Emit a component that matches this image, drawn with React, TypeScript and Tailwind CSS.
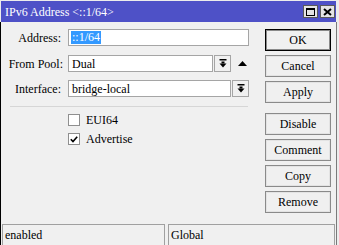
import React from 'react';

function DropIcon() {
  return (
    <svg width="8" height="9" viewBox="0 0 8 9">
      <rect x="0.5" y="0" width="7" height="1.5" fill="#000" />
      <rect x="2.5" y="2.5" width="3" height="2" fill="#000" />
      <polygon points="0.5,4.5 7.5,4.5 4,8.5" fill="#000" />
    </svg>
  );
}

function Btn({ label, primary, className = '' }: { label: string; primary?: boolean; className?: string }) {
  return (
    <button
      className={`h-[22px] w-full bg-[#f0f0f0] text-[12px] text-black leading-none [font-family:Liberation_Serif,serif] ${
        primary ? 'border border-black shadow-[inset_0_0_0_1px_#8a8a8a]' : 'border border-[#8a8a8a] shadow-[inset_0_0_0_1px_#e3e3e3]'
      } ${className}`}
    >
      {label}
    </button>
  );
}

function Check({ checked, label, className = '' }: { checked?: boolean; label: string; className?: string }) {
  return (
    <div className={`flex items-center h-[12px] ${className}`}>
      <div className="w-[12px] h-[12px] border border-[#8f8f8f] bg-white flex items-center justify-center">
        {checked && (
          <svg width="8" height="7" viewBox="0 0 8 7">
            <polyline points="0.8,3.2 3,5.6 7.2,0.8" fill="none" stroke="#000" strokeWidth="1.6" />
          </svg>
        )}
      </div>
      <span className="ml-[6px] text-[12px] leading-none">{label}</span>
    </div>
  );
}

export default function App() {
  return (
    <div className="w-[339px] h-[245px] bg-[#ececec] flex flex-col [font-family:Liberation_Serif,serif] text-black overflow-hidden">
      {/* title bar */}
      <div className="mt-[1px] ml-[1px] mr-[3px] h-[21px] bg-[#4e51c7] flex items-center justify-between pl-[4px] pr-[1px]">
        <span className="text-white text-[12px] leading-none whitespace-nowrap">IPv6 Address &lt;::1/64&gt;</span>
        <div className="flex gap-[2px] items-center">
          <div className="w-[15px] h-[13px] bg-[#e4e4e4] border border-[#5a5a5a] flex items-center justify-center">
            <div className="w-[9px] h-[8px] border border-black border-t-2" />
          </div>
          <div className="w-[15px] h-[13px] bg-[#e4e4e4] border border-[#5a5a5a] flex items-center justify-center">
            <svg width="9" height="8" viewBox="0 0 9 8">
              <path d="M1 1 L8 7 M8 1 L1 7" stroke="#000" strokeWidth="2" />
            </svg>
          </div>
        </div>
      </div>

      {/* body */}
      <div className="flex-1 flex flex-col bg-[#f0f0f0] border-l border-black border-r border-r-[#7a7a7a] mr-[2px]">
        <div className="flex flex-1">
          {/* form */}
          <div className="w-[248px] pt-[7px] text-[12px]">
            <div className="flex items-center h-[17px]">
              <span className="w-[60px] text-right">Address:</span>
              <div className="ml-[7px] w-[181px] h-[17px] border border-[#a5a5a5] bg-white flex items-center pl-[2px]">
                <span className="bg-[#3399ff] text-white leading-[13px] px-[1px]">::1/64</span>
              </div>
            </div>
            <div className="flex items-center h-[17px] mt-[9px]">
              <span className="w-[62px] text-right">From Pool:</span>
              <div className="ml-[5px] w-[145px] h-[17px] border border-[#a5a5a5] bg-white flex items-center pl-[3px]">
                Dual
              </div>
              <div className="ml-[1px] w-[17px] h-[17px] border border-[#a5a5a5] bg-[#f0f0f0] flex items-center justify-center">
                <DropIcon />
              </div>
              <svg className="ml-[7px]" width="9" height="5" viewBox="0 0 9 5">
                <polygon points="0,5 9,5 4.5,0" fill="#000" />
              </svg>
            </div>
            <div className="flex items-center h-[17px] mt-[8px]">
              <span className="w-[60px] text-right">Interface:</span>
              <div className="ml-[7px] w-[163px] h-[17px] border border-[#a5a5a5] bg-white flex items-center pl-[3px]">
                bridge-local
              </div>
              <div className="ml-[1px] w-[17px] h-[17px] border border-[#a5a5a5] bg-[#f0f0f0] flex items-center justify-center">
                <DropIcon />
              </div>
            </div>
            <div className="ml-[9px] mt-[9px] h-px w-[238px] bg-[#d6d6d6]" />
            <div className="pl-[67px]">
              <Check label="EUI64" className="mt-[7px]" />
              <Check label="Advertise" checked className="mt-[7px]" />
            </div>
          </div>

          {/* buttons */}
          <div className="ml-[16px] w-[66px] pt-[7px] flex flex-col">
            <Btn label="OK" primary />
            <Btn label="Cancel" className="mt-[4px]" />
            <Btn label="Apply" className="mt-[4px]" />
            <Btn label="Disable" className="mt-[10px]" />
            <Btn label="Comment" className="mt-[4px]" />
            <Btn label="Copy" className="mt-[4px]" />
            <Btn label="Remove" className="mt-[4px]" />
          </div>
        </div>

        {/* status bar */}
        <div className="flex gap-[3px] pl-[1px] pr-[1px] h-[21px] text-[12px]">
          <div className="w-[163px] border border-[#a0a0a0] border-b-0 flex items-center pl-[2px]">enabled</div>
          <div className="flex-1 border border-[#a0a0a0] border-b-0 flex items-center pl-[2px]">Global</div>
        </div>
      </div>
    </div>
  );
}
